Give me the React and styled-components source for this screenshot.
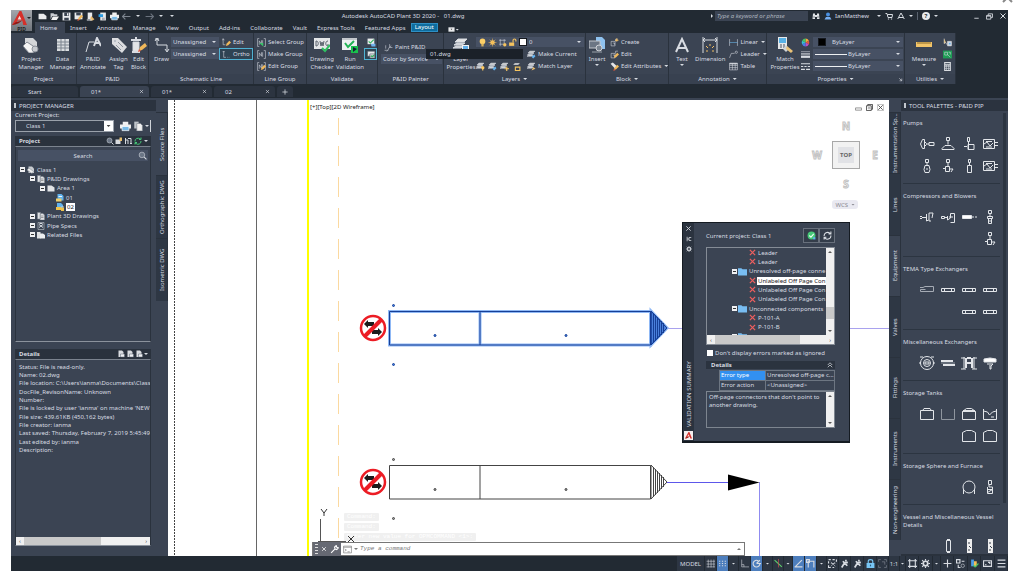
import { useState } from 'react';
import styled, { createGlobalStyle, css } from 'styled-components';

const colors = {
  dark: '#222a33',
  bar: '#2b333f',
  panel: '#3b4453',
  field: '#475164',
  line: '#2a323d',
  text: '#d8dce2',
  blue: '#0e6d9f',
  active: '#4d7ebd',
};

const GlobalStyle = createGlobalStyle`
  * {
    box-sizing: border-box;
  }
  body {
    margin: 0;
    background: #fff;
    color: ${colors.text};
    font-family: 'Noto Sans', 'Open Sans', sans-serif;
    font-size: 6px;
    line-height: 8px;
  }
  button,
  input,
  select,
  textarea {
    margin: 0;
    padding: 0;
    border: 0;
    border-radius: 0;
    background: none;
    color: inherit;
    font: inherit;
  }
  svg {
    display: block;
    flex: none;
  }
`;

/* ---------- icons ---------- */

const stack = (
  <>
    <path d="M5 2h9l-3 3H2z" fill="#e6e6e6" />
    <path d="M4 6h8l-3 2H1zM3 9h8l-3 2H0z" fill="#c9ccd1" />
  </>
);

const group = (
  <>
    <path d="M4 1H1v14h3M12 1h3v14h-3" />
    <path d="M4 12V5l4 6V4M10 4v8" />
  </>
);

const pencil = (
  <path d="M7 14l1-4 5-5 3 3-5 5z" fill="#f0b85a" stroke="none" />
);

const block = (
  <>
    <path d="M2 6h7v8H2zM5 9h3v3" />
    <path d="M10 6V2h4" />
  </>
);

const glyphs = {
  logo: (
    <>
      <path d="M8 0L0 15l4-1 2-4h5l1 5h4L10 0z" fill="#d5302a" stroke="none" />
      <path d="M8 5l2 4H6z" fill="#f3dedc" stroke="none" />
      <path d="M0 15l4-3 7-2-4 3-3 1z" fill="#8f1714" stroke="none" />
    </>
  ),
  newFile: <path d="M1 3h9l5 4v6H1z" fill="#e8eaec" stroke="none" />,
  open: (
    <>
      <path d="M1 2h5l2 2h5v3H4l-3 6z" fill="#c9ccd1" stroke="none" />
      <path d="M5 8h11l-4 6H2z" fill="#f2f2f2" stroke="none" />
    </>
  ),
  save: (
    <>
      <path d="M1 1h14v14H1z" fill="#e8eaec" stroke="none" />
      <path d="M4 1h8v6H4zM4 10h8v5H4z" fill="#3a4350" stroke="none" />
      <path d="M9 2h2v4H9z" fill="#fff" stroke="none" />
    </>
  ),
  saveAs: (
    <>
      <path d="M1 1h14v12H1z" fill="#e8eaec" stroke="none" />
      <path d="M4 1h8v5H4z" fill="#3a4350" stroke="none" />
      {pencil}
      <path d="M6 16l1-4 3 2z" fill="#e4573b" stroke="none" />
    </>
  ),
  plot: (
    <>
      <path d="M3 1h8v12H3z" fill="#e8eaec" stroke="none" />
      <path d="M9 7l6 6-3 2H7z" fill="#e9b869" stroke="none" />
      <path d="M2 13h8v2H2z" />
    </>
  ),
  publish: (
    <>
      <path d="M4 1h10v14H4z" fill="#e8eaec" stroke="none" />
      <path d="M1 4h8v5H1z" fill="#2d9be0" stroke="none" />
      <path d="M7 11h5M7 13h5" stroke="#667" />
    </>
  ),
  printer: (
    <>
      <path d="M4 1h8v4H4zM0 5h16v6H0z" fill="#f0f0f0" stroke="none" />
      <path d="M3 8h10v6H3z" fill="#78b9e6" stroke="#fff" />
    </>
  ),
  undo: <path d="M6 3L1 8l5 5M2 8h13" stroke="#7d8590" strokeWidth="2" />,
  redo: <path d="M10 3l5 5-5 5M14 8H1" stroke="#6b737e" strokeWidth="2" />,
  binoculars: (
    <>
      <path d="M2 3h4v11H1zM10 3h4l1 11h-5zM6 6h4v4H6z" fill="#dfe2e6" stroke="none" />
      <path d="M3 10h2M11 10h2" stroke="#222a33" strokeWidth="2" />
    </>
  ),
  user: (
    <>
      <circle cx="8" cy="5" r="4" fill="#4a90e2" stroke="none" />
      <path d="M1 15l3-5h8l3 5z" fill="#77aef0" stroke="none" />
    </>
  ),
  cart: (
    <>
      <path d="M1 3h3l2 8h8l1-6H5" strokeWidth="2" />
      <circle cx="7" cy="14" r="1" />
      <circle cx="13" cy="14" r="1" />
    </>
  ),
  appTri: <path d="M8 2l5 9H3zM1 13l4-2M15 13l-4-2" strokeWidth="2" />,
  restore: <path d="M5 5V2h10v8h-4M1 6h10v8H1zM1 7h10" strokeWidth="2" />,
  close: <path d="M3 3l10 10M13 3L3 13" strokeWidth="2" />,
  minimise: <path d="M3 12h10" strokeWidth="2" />,
  launcher: <path d="M4 4l8 8M12 5v7H5" strokeWidth="2" />,
  projectManager: (
    <>
      <path d="M2 1h8l4 4v7H2z" fill="#d4d6d9" stroke="none" />
      <path d="M0 9l4-4 9 6-3 5H6z" fill="#f4f4f4" stroke="#858b95" />
      <circle cx="12" cy="12" r="3" fill="#c8cbd0" stroke="#8a9099" />
    </>
  ),
  dataManager: (
    <>
      <path d="M2 2h12v12H2z" fill="#dadde0" stroke="none" />
      <path d="M2 5h12M2 8h12M2 11h12M6 2v12M10 2v12" stroke="#7d858f" />
    </>
  ),
  annotate: (
    <>
      <path d="M1 15l3-10h5" strokeWidth="1" />
      <path d="M9 9l3-8 4 8M10 6h5" strokeWidth="2" />
    </>
  ),
  tag: (
    <>
      <path d="M1 1h6l9 9-5 6-10-9z" fill="#dcdde0" stroke="none" />
      <circle cx="4" cy="4" r="1" fill="#3b4453" />
      <path d="M7 5l5 5M5 8l5 5" stroke="#8d939c" />
    </>
  ),
  editBlock: (
    <>
      <path d="M2 5h6v9H2z" fill="#e2e4e6" />
      <path d="M0 3h10M5 0v3M1 15h8" strokeWidth="2" />
      <path d="M8 14l1-4 5-4 2 3-5 4z" fill="#f0b85a" stroke="none" />
      <path d="M7 15l1-3 2 2z" fill="#e4573b" stroke="none" />
    </>
  ),
  draw: <path d="M3 2v6h10v6M1 2h4M11 12l2 3 2-3M1 4l2-3 2 3" />,
  edit: (
    <>
      <path d="M2 2v10h4M1 4l1-3 2 3" />
      {pencil}
    </>
  ),
  ortho: <path d="M3 2v11h4M9 13h1M12 13h1M1 3h4" />,
  selectGroup: (
    <>
      {group}
      <path d="M4 9l7 6V9z" fill="#39c26a" stroke="none" />
    </>
  ),
  makeGroup: group,
  editGroup: (
    <>
      {group}
      {pencil}
    </>
  ),
  checker: (
    <>
      <path d="M0 1h16v11H0z" fill="#e4e6e8" stroke="none" />
      <path d="M2 4v5c3 0 3-5 0-5zM6 4l1 5 1-4 1 4 1-5M14 4c-3 0-3 5 0 5V7" stroke="#59616c" />
      <path d="M8 11l3 3 5-6" stroke="#2fc061" strokeWidth="2" />
    </>
  ),
  run: (
    <>
      <path d="M0 1h15v12H0z" fill="#eef0f1" stroke="none" />
      <path d="M0 2h15" stroke="#9aa0a8" />
      <path d="M3 6l3 4 6-6" stroke="#22b455" strokeWidth="2" />
      <path d="M9 9h7v7H9z" fill="#19c24c" stroke="none" />
      <path d="M11 10v5l4-3z" fill="#123" stroke="none" />
    </>
  ),
  settingsCheck: (
    <>
      <path d="M1 1h12v10H1z" fill="#e8eaec" stroke="none" />
      <path d="M3 6l3 3 6-6" stroke="#2fb45c" strokeWidth="2" />
      <path d="M7 10h8v5H8z" fill="#6fb2ec" stroke="none" />
    </>
  ),
  summary: (
    <>
      <path d="M1 2h13v9H1zM5 7h9v7H5z" fill="#e8eaec" stroke="#46505c" />
      <path d="M7 10l2 2 4-3" stroke="#2fb45c" strokeWidth="2" />
    </>
  ),
  paint: <path d="M1 13h6l2-5h6M3 10V4M7 13l-2 2M10 2v5l3-2" />,
  layerProps: (
    <>
      {stack}
      <path d="M3 12h8l-3 2H0z" fill="#b9bdc3" stroke="none" />
      <path d="M9 8h7v8H9z" fill="#f2f2f2" stroke="none" />
      <path d="M10 9h5v5h-5z" fill="#62aee8" stroke="none" />
    </>
  ),
  bulb: (
    <>
      <circle cx="8" cy="6" r="5" fill="#fbcf67" stroke="none" />
      <path d="M6 10h4v5H6z" fill="#d9b25d" stroke="none" />
    </>
  ),
  sun: (
    <>
      <circle cx="8" cy="8" r="4" fill="#fbc964" stroke="none" />
      <path d="M8 1v14M1 8h14M3 3l10 10M13 3L3 13" stroke="#f1b956" />
    </>
  ),
  freeze: (
    <>
      <path d="M2 4h12M4 2v12M2 11h8M11 2v7" />
      <circle cx="12" cy="12" r="3" fill="#f4c35f" stroke="none" />
    </>
  ),
  unlock: (
    <>
      <path d="M9 8V4c0-3 5-3 5 0v2" stroke="#f4c35f" strokeWidth="2" />
      <path d="M2 8h9v6H2z" fill="#f4c35f" stroke="none" />
    </>
  ),
  stackOn: (
    <>
      {stack}
      <circle cx="12" cy="10" r="3" fill="#fbc964" stroke="none" />
      <path d="M11 12h2v3h-2z" fill="#fbc964" stroke="none" />
    </>
  ),
  stackBlue: (
    <>
      {stack}
      <path d="M8 12l5-4 2 3-4 4z" fill="#66b3ee" stroke="none" />
    </>
  ),
  stackSun: (
    <>
      {stack}
      <path d="M12 8v8M8 12h8" stroke="#fbc964" strokeWidth="2" />
    </>
  ),
  stackLock: (
    <>
      <path d="M5 2h9l-3 3H2z" fill="#e6e6e6" stroke="none" />
      <path d="M6 9h8v6H6z" stroke="#f4c35f" strokeWidth="2" />
    </>
  ),
  stackMatch: (
    <>
      {stack}
      <path d="M8 15l3-6 4 3z" fill="#eabc6c" stroke="none" />
    </>
  ),
  insert: (
    <>
      <path d="M7 0h6l3 3v9H7z" fill="#8fc2ef" stroke="none" />
      <path d="M0 4h11v7H0z" fill="#6c7684" stroke="#c3c7cd" />
      <circle cx="10" cy="11" r="3" fill="#7c8692" stroke="#d0d3d8" />
      <path d="M3 15l10 0" stroke="#9aa1ab" />
    </>
  ),
  create: (
    <>
      {block}
      <path d="M12 1v5M9 4h6" stroke="#f2bf65" strokeWidth="2" />
    </>
  ),
  blockEdit: (
    <>
      {block}
      {pencil}
    </>
  ),
  attributes: (
    <>
      <path d="M1 3l4-2 8 7-4 4z" fill="#e3e5e8" stroke="none" />
      {pencil}
      <path d="M6 16l1-4 3 2z" fill="#e4573b" stroke="none" />
    </>
  ),
  textA: <path d="M2 15L8 2l6 13M4 11h8" strokeWidth="2" />,
  dimension: (
    <>
      <path d="M1 0v16M15 0v16M1 3h14M3 1L1 3l2 2M13 1l2 2-2 2" />
      <path d="M8 7v2M4 9l2 2M12 9l-2 2M4 14h2M10 14h2" stroke="#f2bf65" />
    </>
  ),
  linear: (
    <>
      <path d="M1 2v12M15 2v12" />
      <path d="M1 8h14" stroke="#6ab7ee" />
    </>
  ),
  leader: (
    <>
      <path d="M1 14l3-8h6" />
      <circle cx="13" cy="4" r="2" />
    </>
  ),
  table: (
    <>
      <path d="M1 2h14v12H1zM1 6h14M1 10h14M6 2v12M11 2v12" />
      <path d="M1 3h14" strokeWidth="2" />
    </>
  ),
  match: (
    <>
      <path d="M1 0h9v12H1z" fill="#e6e8ea" stroke="none" />
      <path d="M2 1h7v5H2z" fill="#58b1e6" stroke="none" />
      <path d="M3 8h2M6 8h2M3 10h2M6 10h2" stroke="#4a5360" />
      <path d="M6 12l3-4 3 4-3 3z" fill="#cfd3d8" stroke="none" />
      <path d="M10 9l6 5-2 2-5-4z" fill="#e9c277" stroke="none" />
    </>
  ),
  wheel: (
    <>
      <path d="M8 8V1a7 7 0 0 1 6 4z" fill="#f3a93c" stroke="none" />
      <path d="M8 8l6-3a7 7 0 0 1 0 6z" fill="#e4573b" stroke="none" />
      <path d="M8 8l6 3a7 7 0 0 1-6 4z" fill="#c14dc0" stroke="none" />
      <path d="M8 8v7a7 7 0 0 1-6-4z" fill="#4a7be8" stroke="none" />
      <path d="M8 8l-6 3a7 7 0 0 1 0-6z" fill="#35c1d4" stroke="none" />
      <path d="M8 8L2 5a7 7 0 0 1 6-4z" fill="#47c765" stroke="none" />
    </>
  ),
  weights: (
    <>
      <path d="M0 3h16" />
      <path d="M0 7h16" strokeWidth="2" />
      <path d="M0 12h16" strokeWidth="4" />
    </>
  ),
  dashes: <path d="M0 3h16M0 8h4M6 8h4M12 8h4M0 13h7M9 13h7" strokeWidth="2" />,
  ruler: (
    <>
      <path d="M0 5h16v5H0z" fill="#f2c468" stroke="none" />
      <path d="M2 5v2M4 5v2M6 5v2M8 5v2M10 5v2M12 5v2M14 5v2" stroke="#8a6a2a" />
    </>
  ),
  quickSelect: (
    <>
      <path d="M2 1v9l3-2 2 4" fill="#f2c468" />
      <path d="M8 6h7v8H8z" fill="#e4e6e8" />
      <path d="M10 8h4v4h-4z" fill="#5aa9e6" />
    </>
  ),
  selectAll: (
    <>
      <path d="M0 1h16v14H0z" fill="#1f9d55" stroke="none" />
      <path d="M3 4h5v5H3zM8 8l5 5M10 4h3v4" />
    </>
  ),
  calculator: (
    <>
      <path d="M2 0h12v16H2z" fill="#d9dce0" stroke="none" />
      <path d="M4 2h8v2H4z" fill="#47515f" stroke="none" />
      <path d="M4 7h2M7 7h2M10 7h2M4 10h2M7 10h2M10 10h2M4 13h2M7 13h2M10 13h2" stroke="#47515f" strokeWidth="2" />
    </>
  ),
  media: (
    <>
      <path d="M1 3h14v10H1z" fill="#e8eaec" stroke="none" />
      <path d="M6 6h4l-2 3z" fill="#333" stroke="none" />
    </>
  ),
  copy: (
    <>
      <path d="M2 1h7v11H2z" fill="#bfc4ca" stroke="none" />
      <path d="M6 4h6l3 3v9H6z" fill="#f0f0f0" stroke="#7b828c" />
    </>
  ),
  magnifier: (
    <>
      <circle cx="7" cy="7" r="5" fill="#6b7686" />
      <path d="M11 11l4 4" strokeWidth="2" />
    </>
  ),
  folderOpen: (
    <>
      <path d="M1 5h10v9H1z" fill="#d7dade" stroke="none" />
      <path d="M9 1h5v7H9z" fill="#eac06e" stroke="none" />
    </>
  ),
  tree: <path d="M3 2v12M3 6h5v8M8 3h6v10M12 13h4" strokeWidth="2" />,
  refresh: (
    <path d="M2 9a6 6 0 0 1 10-5l2 1M14 1v4h-4M14 8a6 6 0 0 1-10 5l-2-1M2 15v-4h4" strokeWidth="2" />
  ),
  project: (
    <>
      <path d="M3 1h7l4 4v9H3z" fill="#c8ccd1" stroke="none" />
      <path d="M0 8l4-4 9 7-3 4z" fill="#eee" stroke="#7b828c" />
    </>
  ),
  drawings: (
    <>
      <path d="M1 1h6v13H1zM6 3h6l3 3v10H6z" fill="#e0e2e5" stroke="#7b828c" />
      <path d="M8 8h5M8 11h5" stroke="#555" />
    </>
  ),
  folder: <path d="M1 3h8l6 4v8H1z" fill="#e2e4e7" stroke="none" />,
  dwg: (
    <>
      <path d="M3 0h8l4 4v9H3z" fill="#62b3ee" stroke="none" />
      <path d="M0 9h11v6H0z" fill="#f0cf6d" stroke="none" />
      <path d="M5 5h7" stroke="#e9f4fd" strokeWidth="2" />
    </>
  ),
  dwgLocked: (
    <>
      <path d="M2 0h8l4 4v6H2z" fill="#62b3ee" stroke="none" />
      <path d="M0 8h10v6H0zM10 9h6v7h-6z" fill="#f0c34d" stroke="none" />
      <path d="M11 9V7h4v2" />
    </>
  ),
  specs: (
    <>
      <path d="M2 1h12v14H2z" />
      <path d="M4 5l8 6M12 5l-8 6M5 3h6" strokeWidth="2" />
    </>
  ),
  related: (
    <>
      <path d="M0 2h7v13H0z" fill="#dfe1e4" stroke="none" />
      <path d="M6 5h6l4 3v7H6z" fill="#eceef0" stroke="none" />
    </>
  ),
  sheet: (
    <>
      <path d="M3 1h7l3 3v10H3z" fill="#d9dce0" stroke="none" />
      <path d="M7 8h8v6H7z" fill="#eef0f2" stroke="#555e6a" />
    </>
  ),
  redX: <path d="M2 2l12 12M14 2L2 14" stroke="#ee5f5f" strokeWidth="3" />,
  blueFolder: <path d="M0 2h6l2 2h8v11H0z" fill="#78bdf2" stroke="none" />,
  validated: (
    <>
      <circle cx="8" cy="8" r="7" fill="#46c878" stroke="none" />
      <path d="M4 8l3 3 5-6" stroke="#e9fff1" strokeWidth="2" />
      <path d="M11 11h4v4h-4z" fill="#5cb3f0" stroke="none" />
    </>
  ),
  pin: <path d="M3 2v12M3 8h5M8 4h6M8 12h6M8 4v8" strokeWidth="2" />,
  gear: (
    <>
      <circle cx="8" cy="8" r="4" strokeWidth="3" />
      <path d="M8 0v3M8 13v3M0 8h3M13 8h3M2 2l3 3M11 11l3 3M14 2l-3 3M5 11l-3 3" strokeWidth="2" />
    </>
  ),
  chevrons: <path d="M2 8l6-6 6 6M2 14l6-6 6 6" strokeWidth="2" />,
  wrench: (
    <path d="M2 14l7-7M9 7l-1-3 3-3 1 3 3 1-3 3z" strokeWidth="2" />
  ),
  prompt: (
    <>
      <path d="M1 2h14v12H1zM1 4h14" stroke="#666" />
      <path d="M3 7l3 2-3 2M8 12h4" stroke="#666" />
    </>
  ),
  maximise: (
    <>
      <path d="M4 4V1h11v11h-3M1 4h11v11H1z" stroke="#444" strokeWidth="2" />
      <path d="M5 8h4v3H5z" stroke="#666" />
    </>
  ),
  boxX: (
    <>
      <path d="M1 1h14v14H1z" stroke="#777" />
      <path d="M3 3l10 10M13 3L3 13" stroke="#444" strokeWidth="2" />
    </>
  ),
  boxMin: <path d="M1 9h14v5H1z" stroke="#888" strokeWidth="2" />,
  grid: <path d="M4 1v14M9 1v14M14 1v14M1 4h15M1 9h15M1 14h15" />,
  dots: (
    <path d="M2 4h2M7 4h2M12 4h2M2 8h2M7 8h2M12 8h2M2 12h2M7 12h2M12 12h2" strokeWidth="2" />
  ),
  corner: <path d="M3 1v13h13M3 10h4v4" />,
  polar: <path d="M14 8a6 6 0 1 1-3-5M8 8h8M8 8l6-6" strokeWidth="2" />,
  iso: (
    <>
      <path d="M1 2l13 12" stroke="#5fd06c" strokeWidth="2" />
      <path d="M8 0v15" stroke="#e05353" />
    </>
  ),
  slope: <path d="M2 14L14 2M1 14h14" strokeWidth="2" />,
  snap: <path d="M4 4h10v11M4 4v11M1 1h5v5H1z" strokeWidth="2" />,
  cycling: (
    <>
      <path d="M1 1h4M8 1h4M15 1v4M1 4v4M1 11v4h4M8 15h3" strokeWidth="2" />
      <path d="M5 5l8 8M13 5l-8 8M5 8h8" />
    </>
  ),
  person: <path d="M3 15l5-8 5 5M8 7L5 4M8 7l6-1M9 3h3" strokeWidth="3" />,
  lock: (
    <>
      <path d="M4 7V4c0-4 8-4 8 0v3" stroke="#78c6f5" strokeWidth="2" />
      <path d="M1 7h14v9H1z" fill="#78c6f5" stroke="none" />
      <path d="M8 10v3" stroke="#2a5d80" strokeWidth="2" />
    </>
  ),
  viewport: <path d="M1 5V1h4M11 1h4v4M15 11v4h-4M5 15H1v-4M7 5h5v5" stroke="#8c939d" />,
  scaleBox: <path d="M3 3h10v10H3zM0 3h3V0M13 0v3h3M16 13h-3v3M3 16v-3H0" strokeWidth="2" />,
  plus: <path d="M8 1v14M1 8h14" strokeWidth="2" />,
  isolate: (
    <>
      <path d="M1 1h6v6H1zM10 4h5M4 10v5h4" strokeWidth="2" />
      <circle cx="12" cy="12" r="3" />
    </>
  ),
  performance: (
    <>
      <path d="M2 1h5v12H2z" fill="#4c9de8" stroke="none" />
      <path d="M7 4h5v9H7z" fill="#f2bf58" stroke="none" />
      <path d="M6 11l3 3 6-6" stroke="#48c96c" strokeWidth="2" />
    </>
  ),
  fullscreen: <path d="M1 3h14v10H1zM9 6h3v3M4 10h2" strokeWidth="2" />,
  menu: <path d="M1 2h14M1 8h14M1 14h14" strokeWidth="2" />,
  /* palette symbols */
  pumpA: (
    <>
      <path d="M3.500 3.500h2v9h-2l-2-4.500zM5.500 5.500l2 2v1l-2 2" />
      <path d="M8 8h2M10 6.500h5v3h-5z" />
    </>
  ),
  pumpB: <path d="M6.500 1.500h3v3h-3zM8 4.500v4M5 9.500h6l3 3v1H2v-1z" />,
  pumpC: <path d="M6.500 1.500h2v4h-2zM7.500 6v8M3 10.500h3M7 8.500h6v5H7z" />,
  pumpD: <path d="M1.500 3.500h11v9h-11zM2 8l3-2 3 4 3-3M4 5.500h6M4 11h6M13 6.500h3M13 9.500h3" />,
  pumpE: (
    <>
      <path d="M6.500 1.500h3v3h-3zM8 5v2M6 7.500h4l1 4-1 3H6l-1-3z" />
      <path d="M8 10v2" />
    </>
  ),
  pumpF: <path d="M6.500 1.500h3v3h-3zM8 5v3M5.500 8.500h4v5h-4zM10 11h3l-2 3M3 10.500h3" />,
  pumpG: <path d="M7.500 1.500h2v3h-2zM8.500 5v2M6.500 7.500h4v7h-4z" />,
  compA: <path d="M1 7.500h2M1 9.500h2M3 8.500h4M7.500 5v7l2-1M14 4h-4v8h2M14 4l-1 5" />,
  compB: <path d="M1.500 7.500h3v2h-3zM5 8.500h2M7.500 7v4l3-2V4.500h4v9h-4M9 8h4" />,
  compC: (
    <>
      <path d="M1.500 6.500h9v3h-9z" fill="#fff" />
      <path d="M11 8h2M14 8h2" />
    </>
  ),
  compD: <path d="M6.500 1.500h3v3h-3zM8 5v2M5.500 7.500h5v2h-5zM6.500 9.500h3v5h-3zM8 11v2" />,
  exA: <path d="M1 5.500h3l2-1h8.500v5H1.500v-2h5" stroke="#a5abb4" />,
  exB: <path d="M1.500 6.500h13v3h-13zM4.500 6v4M11.500 6v4" />,
  miscA: (
    <>
      <circle cx="8" cy="8" r="6.500" />
      <circle cx="8" cy="8" r="3.500" />
      <path d="M6 7h4v2H6zM0 8h2M14 8h2M1 2h3M12 2h3" />
    </>
  ),
  miscB: (
    <>
      <path d="M1 6h12M3 10h12" strokeWidth="2" />
      <path d="M1 8h14" stroke="#8d949e" />
    </>
  ),
  miscC: (
    <>
      <path d="M3 2v12M13 2v12M0 3h4M12 3h4M0 14h5M11 14h5" />
      <path d="M5 3v10M11 3v10M6 8h4M6 3h4" strokeWidth="2" />
    </>
  ),
  miscD: (
    <>
      <path d="M2 4l6-1 6 1v3H2z" fill="#fff" />
      <path d="M5 9h6l-2 2v3H8v-4" />
    </>
  ),
  tankA: <path d="M1.500 4.500h13v9h-13zM4 4l1-1.500h6l1 1.500" />,
  tankB: <path d="M1.500 3v10.500h13V3" stroke="#8f969f" />,
  tankC: <path d="M1.500 5.500h13v8h-13zM1.500 5.500l4-3h5l4 3M2 4.500h12" />,
  tankD: <path d="M1.500 3v10.500h13V3M1.500 5l4 1 2 3 3-3 4-1M9 11h3" />,
  tankE: <path d="M1.500 4.500l4-2h5l4 2v9h-13z" />,
  sphere: (
    <>
      <circle cx="8" cy="8" r="6" />
      <path d="M2.500 10v5M13.500 10v5" />
    </>
  ),
  furnace: <path d="M6.500 1.500h3v4h-3zM7 6v2h3.500v2.500h-5M5.500 8v6.500h5v-4l-5 3" />,
  vesselA: <path d="M6.500 2.500h4v11h-4zM7 1.500h3M7 14.500h3" />,
  vesselB: (
    <>
      <path d="M6 1h5v14H6z" fill="#eee" stroke="none" />
      <path d="M7 5h2M8 8l2 2M7 12h2" stroke="#333b47" />
    </>
  ),
};

function Glyph({ name, size = 9 }) {
  return (
    <svg
      width={size}
      height={size}
      viewBox="0 0 16 16"
      fill="none"
      stroke="currentColor"
      aria-hidden="true"
    >
      {glyphs[name]}
    </svg>
  );
}

const Caret = styled.span`
  flex: none;
  width: 4px;
  height: 2px;
  background: currentColor;
  clip-path: polygon(0 0, 100% 0, 50% 100%);
`;

/* ---------- frame ---------- */

const Page = styled.div`
  display: flex;
  flex-direction: column;
  height: 100vh;
  min-height: 480px;
  padding: 0 11px 9px;
`;

const Backdrop = styled.div`
  flex: none;
  display: flex;
  justify-content: flex-end;
  height: 10px;
  margin-right: -7px;
  color: #888;
`;

const Window = styled.div`
  flex: 1;
  display: flex;
  flex-direction: column;
  min-height: 0;
  background: ${colors.dark};
`;

const Header = styled.header`
  display: grid;
  grid-template: 12px 11px / 24px 1fr;
`;

const AppButton = styled.button`
  grid-row: 1 / 3;
  width: 21px;
  height: 21px;
  display: flex;
  flex-wrap: wrap;
  align-items: center;
  justify-content: center;
  background: linear-gradient(#a3a7ac, #6f747b);
  color: #222;
  font-size: 5px;
  line-height: 4px;
  font-weight: bold;
`;

const TitleBar = styled.div`
  display: flex;
  align-items: center;
  justify-content: space-between;
  min-width: 0;
`;

const IconRow = styled.div`
  display: flex;
  align-items: center;
  gap: ${(p) => p.$gap || 0}px;
`;

const QuickTools = styled(IconRow)`
  padding-left: 3px;
  ${Caret} {
    margin: 0 2px;
  }
`;

const IconButton = styled.button`
  flex: 0 0 ${(p) => p.$w || 10}px;
  display: flex;
  align-items: center;
  justify-content: center;
`;

const Title = styled.h1`
  margin: 0;
  padding-right: 80px;
  font-size: 6px;
  font-weight: normal;
  white-space: pre;
`;

const SearchInput = styled.input`
  width: 93px;
  height: 10px;
  padding-left: 2px;
  background: ${colors.panel};
  font-style: italic;
  &::placeholder {
    color: #aeb5bf;
  }
`;

const Expand = styled(Caret)`
  transform: rotate(-90deg);
`;

const UserMenu = styled.button`
  display: flex;
  align-items: center;
  gap: 3px;
  margin-right: 4px;
`;

const WindowButtons = styled(IconRow)`
  padding-left: 30px;
`;

const HelpButton = styled(IconButton)`
  height: 8px;
  flex-basis: 8px;
  border-radius: 4px;
  background: #e8eaec;
  color: #222a33;
  font-weight: bold;
`;

const Divider = styled.span`
  width: 1px;
  height: 8px;
  background: #59626e;
`;

const MenuTabs = styled.nav`
  display: flex;
  align-items: flex-end;
`;

const MenuTab = styled.button`
  height: 11px;
  padding: 0 5px;
  line-height: 10px;
  white-space: nowrap;
  ${(p) =>
    p.$active &&
    css`
      padding-right: 8px;
      background: ${colors.panel};
    `}
  ${(p) =>
    p.$contextual &&
    css`
      height: 9px;
      margin: 0 8px 1px 0;
      padding: 0 3px;
      border: 1px solid #2f8fc4;
      background: ${colors.blue};
      line-height: 7px;
      color: #fff;
    `}
`;

/* ---------- ribbon ---------- */

const Ribbon = styled.div`
  flex: none;
  display: flex;
  height: 51px;
`;

const RibbonPanel = styled.section`
  flex: 0 0 ${(p) => p.$w}px;
  display: flex;
  flex-direction: column;
  min-width: 0;
  border-right: 1px solid ${colors.line};
  background: ${colors.panel};
`;

const PanelBody = styled.div`
  flex: 1;
  display: flex;
  gap: ${(p) => p.$gap || 0}px;
  padding-left: ${(p) => p.$pad || 0}px;
`;

const PanelTitle = styled.h2`
  position: relative;
  display: flex;
  align-items: center;
  justify-content: center;
  gap: 3px;
  height: 10px;
  margin: 0;
  font-size: 6px;
  font-weight: normal;
  background: #384150;
  button {
    position: absolute;
    right: 1px;
  }
`;

const BigTool = styled.button`
  position: relative;
  flex: 0 0 ${(p) => p.$w}px;
  display: flex;
  flex-direction: column;
  align-items: center;
  padding-top: 4px;
  text-align: center;
  white-space: pre;
  svg {
    margin-bottom: 2px;
  }
  ${Caret} {
    margin-top: 1px;
  }
`;

const ToolList = styled.div`
  flex: ${(p) => (p.$w ? `0 0 ${p.$w}px` : 1)};
  display: flex;
  flex-direction: column;
  min-width: 0;
  padding-top: ${(p) => p.$top || 3}px;
`;

const ToolRow = styled.div`
  display: flex;
  align-items: center;
  gap: 3px;
  height: 12px;
`;

const SmallTool = styled.button`
  display: flex;
  align-items: center;
  gap: 2px;
  height: 12px;
  padding: 0 2px;
  white-space: nowrap;
  border: 1px solid ${(p) => (p.$on ? '#4fb2d3' : 'transparent')};
  background: ${(p) => (p.$on ? '#2f4353' : 'none')};
  ${Caret} {
    margin-left: 1px;
  }
`;

const SelectWrap = styled.div`
  flex: ${(p) => (p.$w ? `0 0 ${p.$w}px` : 1)};
  display: grid;
  align-items: center;
  min-width: 0;
  height: 10px;
  background: ${colors.field};
  > * {
    grid-area: 1 / 1;
  }
  ${Caret} {
    justify-self: end;
    margin-right: 3px;
    pointer-events: none;
  }
`;

const Select = styled.select`
  width: 100%;
  height: 10px;
  padding-left: ${(p) => p.$pad || 2}px;
  appearance: none;
  outline: none;
`;

const SelectLead = styled.span`
  display: flex;
  align-items: center;
  gap: 1px;
  padding-left: 2px;
  pointer-events: none;
`;

const Swatch = styled.span`
  width: 8px;
  height: 8px;
  margin-left: ${(p) => p.$left || 0}px;
  border: 1px solid #15191f;
  background: ${(p) => p.$color};
`;

const Stroke = styled.span`
  width: 32px;
  height: 1px;
  background: #eef0f2;
`;

const Tooltip = styled.div`
  position: absolute;
  top: 49px;
  left: 426px;
  z-index: 5;
  width: 97px;
  height: 10px;
  padding-left: 4px;
  background: #1b2129;
  line-height: 10px;
`;

/* ---------- file tabs ---------- */

const FileTabs = styled.div`
  flex: none;
  display: flex;
  align-items: flex-end;
  gap: 2px;
  height: 14px;
  padding-bottom: 1px;
`;

const FileTab = styled.div`
  flex: 0 0 ${(p) => p.$w}px;
  display: flex;
  align-items: center;
  justify-content: space-between;
  height: 11px;
  padding: 0 5px 0 ${(p) => p.$pad}px;
  border-radius: 3px 3px 0 0;
  background: ${(p) => (p.$active ? '#3a4352' : '#2c3440')};
`;

/* ---------- workspace ---------- */

const Workspace = styled.main`
  flex: 1;
  display: flex;
  min-height: 0;
  border-top: 2px solid ${colors.panel};
`;

const SidePanel = styled.aside`
  flex: 0 0 ${(p) => p.$w}px;
  display: flex;
  min-width: 0;
  background: ${colors.panel};
`;

const SideContent = styled.div`
  flex: 1;
  display: flex;
  flex-direction: column;
  min-width: 0;
`;

const SideTitle = styled.h2`
  flex: none;
  display: flex;
  align-items: center;
  gap: 3px;
  height: 11px;
  margin: 0;
  padding-left: 3px;
  background: ${colors.bar};
  font-size: 6px;
  font-weight: normal;
  &::before {
    content: '';
    width: 2px;
    height: 5px;
    background: #c3c8ce;
  }
`;

const VerticalTabs = styled.div`
  flex: 0 0 ${(p) => p.$w}px;
  display: flex;
  flex-direction: column;
  padding-top: 12px;
`;

const VerticalTab = styled.button`
  flex: 0 0 ${(p) => p.$h}px;
  display: flex;
  align-items: center;
  justify-content: center;
  border: 1px solid ${colors.line};
  border-width: 0 0 1px 1px;
  background: ${(p) => (p.$active ? colors.panel : '#2e3744')};
  writing-mode: vertical-rl;
  transform: rotate(180deg);
  white-space: nowrap;
`;

const ProjectArea = styled.div`
  flex: 1;
  display: flex;
  flex-direction: column;
  min-height: 0;
  padding: 0 5px 10px 4px;
`;

const FieldLabel = styled.label`
  line-height: 9px;
`;

const ProjectPicker = styled.div`
  display: flex;
  align-items: center;
  gap: 2px;
  height: 12px;
  border-right: 1px solid #cfd3d8;
`;

const PickerField = styled(SelectWrap)`
  height: 12px;
  border: 1px solid #9aa1ab;
  background: #343d4b;
  margin-right: 4px;
`;

const PickerArrow = styled.span`
  justify-self: end;
  width: 9px;
  height: 10px;
  display: flex;
  align-items: center;
  justify-content: center;
  background: #fff;
  color: #444;
  pointer-events: none;
  ${Caret} {
    margin: 0;
  }
`;

const SectionBar = styled.div`
  flex: none;
  display: flex;
  align-items: center;
  justify-content: space-between;
  height: 10px;
  margin-top: ${(p) => p.$top}px;
  padding: 0 3px 0 4px;
  background: ${colors.line};
  font-weight: bold;
`;

const Frame = styled.div`
  flex: ${(p) => p.$grow} 1 0;
  display: flex;
  flex-direction: column;
  min-height: 0;
  overflow: hidden;
  border: 1px solid ${colors.line};
  border-top-color: #7b838e;
  border-bottom-color: #8b929c;
`;

const TreeSearch = styled.div`
  flex: none;
  display: flex;
  align-items: center;
  height: 11px;
  margin: 3px 2px 4px;
  padding: 0 1px 0 10px;
  background: ${colors.field};
  input {
    flex: 1;
    min-width: 0;
    text-align: center;
  }
  input::placeholder {
    color: ${colors.text};
  }
`;

const Rows = styled.ul`
  display: grid;
  grid-auto-rows: 9px 9px 10px;
  margin: 0;
  padding: 0;
  list-style: none;
`;

const TreeRow = styled.li`
  display: flex;
  align-items: center;
  gap: ${(p) => p.$gap || 2}px;
  padding-left: ${(p) => p.$indent}px;
  white-space: nowrap;
`;

const Toggle = styled.span`
  flex: 0 0 5px;
  display: flex;
  align-items: center;
  justify-content: center;
  height: 5px;
  background: #f0f1f3;
  &::before {
    content: '';
    width: 3px;
    height: 1px;
    background: #333;
  }
`;

const Selected = styled.span`
  padding: 0 1px;
  background: #fff;
  color: #1c2026;
`;

const ErrorName = styled.span`
  flex: 1;
  padding-left: 1px;
  ${(p) =>
    p.$selected &&
    css`
      background: #fff;
      color: #1c2026;
    `}
`;

const Info = styled.div`
  flex: 1;
  display: grid;
  grid-auto-rows: 8px 8px 9px;
  align-content: start;
  min-height: 0;
  padding: 3px 0 0 3px;
  overflow: hidden;
  white-space: nowrap;
`;

const HScroll = styled.div`
  flex: none;
  display: flex;
  align-items: center;
  justify-content: space-between;
  height: ${(p) => p.$h || 8}px;
  padding: 0 3px;
  background: #f0f0f0;
  color: #444;
`;

const Thumb = styled.span`
  flex: 0 0 ${(p) => p.$w}%;
  height: 100%;
  margin-right: auto;
  margin-left: 3px;
  background: #c9c9c9;
`;

/* ---------- canvas ---------- */

const Canvas = styled.section`
  position: relative;
  flex: 1;
  min-width: 0;
  overflow: hidden;
  background: #fff;
  color: #333;
`;

const Sheet = styled.svg`
  position: relative;
  width: 100%;
  height: 100%;
`;

const ViewLabel = styled.div`
  position: absolute;
  top: 3px;
  left: 142px;
  color: #222;
`;

const DocButtons = styled.div`
  position: absolute;
  top: 4px;
  right: 5px;
  display: flex;
  gap: 4px;
`;

const ViewCube = styled.div`
  position: absolute;
  top: 19px;
  right: 7px;
  display: grid;
  grid-template: 14px 44px 14px / 14px 44px 14px;
  place-items: center;
  color: #fff;
  font-size: 10px;
  font-weight: bold;
  -webkit-text-stroke: 1px #c2c2c2;
  span:nth-child(1) {
    grid-area: 1 / 2;
  }
  span:nth-child(2) {
    grid-area: 2 / 1;
  }
  span:nth-child(4) {
    grid-area: 2 / 3;
  }
  span:nth-child(5) {
    grid-area: 3 / 2;
  }
`;

const CubeFace = styled.button`
  grid-area: 2 / 2;
  width: 28px;
  height: 28px;
  border: 1px solid #a8a8a8;
  background: #e1e2e6;
  box-shadow: inset 0 0 0 5px #f2f2f2;
  color: #666;
  font-size: 6px;
  -webkit-text-stroke: 0;
`;

const Wcs = styled.button`
  position: absolute;
  top: 100px;
  right: 31px;
  display: flex;
  align-items: center;
  gap: 3px;
  height: 9px;
  padding: 0 3px;
  border-radius: 3px;
  background: #e9e9f1;
  color: #8a8a92;
`;

const History = styled.div`
  position: absolute;
  left: 176px;
  bottom: 15px;
  display: flex;
  flex-direction: column;
  align-items: flex-start;
  gap: 2px;
  color: #fff;
  font-family: 'Liberation Mono', monospace;
  font-size: 6px;
  span {
    padding: 0 3px;
    border-radius: 1px;
    background: #f0f0f0;
  }
`;

const CommandLine = styled.div`
  position: absolute;
  right: 144px;
  bottom: 0;
  left: 144px;
  display: flex;
  align-items: center;
  gap: 2px;
  height: 14px;
  padding-right: 3px;
  border: 1px solid #777;
  background: #fff;
  color: #777;
  input {
    flex: 1;
    min-width: 0;
    outline: none;
    font-family: 'Liberation Mono', monospace;
    font-size: 6px;
    font-style: italic;
  }
  input::placeholder {
    color: #777;
  }
`;

const CommandGrip = styled.div`
  flex: 0 0 28px;
  display: flex;
  align-items: center;
  justify-content: space-between;
  height: 14px;
  padding: 0 2px;
  background: #666973;
  color: #fff;
  &::before {
    content: '';
    width: 3px;
    height: 10px;
    background: repeating-linear-gradient(#ddd 0 1px, transparent 1px 3px);
  }
`;

/* ---------- validation dialog ---------- */

const Dialog = styled.div`
  position: absolute;
  top: 122px;
  left: 514px;
  display: flex;
  width: 168px;
  height: 221px;
  border: 1px solid #151b22;
  border-bottom-width: 2px;
  background: ${colors.panel};
  color: ${colors.text};
`;

const DialogStrip = styled.div`
  flex: 0 0 11px;
  display: flex;
  flex-direction: column;
  align-items: center;
  gap: 4px;
  padding: 2px 0 1px;
  background: ${colors.bar};
`;

const StripTitle = styled.h2`
  flex: 1;
  display: flex;
  align-items: center;
  margin: 0;
  font-size: 6px;
  font-weight: normal;
  writing-mode: vertical-rl;
  transform: rotate(180deg);
  white-space: nowrap;
`;

const Badge = styled.span`
  width: 9px;
  height: 9px;
  display: flex;
  align-items: center;
  justify-content: center;
  background: #f4eeee;
`;

const DialogBody = styled.div`
  flex: 1;
  display: flex;
  flex-direction: column;
  min-width: 0;
  padding: 5px 14px 0 12px;
`;

const DialogHead = styled.div`
  display: flex;
  align-items: center;
  height: 15px;
  margin-bottom: 4px;
  span {
    flex: 1;
  }
`;

const BoxButton = styled.button`
  width: 16px;
  height: 15px;
  display: flex;
  align-items: center;
  justify-content: center;
  border: 1px solid #68707c;
  background: #343d4a;
`;

const ErrorBox = styled.div`
  flex: none;
  height: 98px;
  display: flex;
  flex-direction: column;
  border: 1px solid #858c96;
`;

const ErrorView = styled.div`
  flex: 1;
  display: flex;
  min-height: 0;
  overflow: hidden;
`;

const ErrorRows = styled(Rows)`
  flex: 1;
  align-content: start;
  min-width: 0;
  overflow: hidden;
`;

const VScroll = styled.div`
  flex: 0 0 8px;
  display: flex;
  flex-direction: column;
  align-items: center;
  justify-content: space-between;
  padding: 3px 0;
  background: #f0f0f0;
  color: #555;
  ${Thumb} {
    flex: 0 0 12px;
    width: 8px;
    margin: auto 0 11px;
  }
`;

const Up = styled(Caret)`
  transform: rotate(180deg);
`;

const IgnoreLabel = styled.label`
  display: flex;
  align-items: center;
  gap: 2px;
  height: 16px;
  white-space: nowrap;
  input {
    width: 6px;
    height: 6px;
    margin-left: 1px;
    appearance: none;
    background: #fff;
  }
  input:checked {
    background: #4a9be8;
  }
`;

const DetailsBar = styled.div`
  flex: none;
  display: flex;
  align-items: center;
  justify-content: space-between;
  height: 8px;
  padding: 0 2px 0 5px;
  background: ${colors.bar};
  font-weight: bold;
`;

const ErrorTable = styled.table`
  width: calc(100% - 13px);
  margin: 1px 0 0 13px;
  border-collapse: collapse;
  table-layout: fixed;
  th,
  td {
    height: 10px;
    padding: 0 0 0 1px;
    border: 1px solid #6d7682;
    overflow: hidden;
    font-weight: normal;
    line-height: 9px;
    text-align: left;
    white-space: nowrap;
  }
  th {
    width: 46px;
  }
  tr:first-child th {
    background: #3290f0;
    color: #fff;
  }
`;

const Description = styled.div`
  flex: none;
  display: flex;
  height: 37px;
  border: 1px solid #7d858f;
  textarea {
    flex: 1;
    min-width: 0;
    padding: 1px 2px;
    overflow: hidden;
    outline: none;
    resize: none;
  }
`;

/* ---------- tool palette ---------- */

const Palette = styled.div`
  flex: 1;
  min-height: 0;
  display: flex;
  overflow: hidden;
  border-bottom: 2px solid ${colors.line};
`;

const PaletteList = styled.div`
  flex: 1;
  min-width: 0;
  padding-left: 2px;
`;

const PaletteScroll = styled.div`
  flex: 0 0 3px;
  height: 88%;
  margin: 2px 2px 0 3px;
  background: #2c3541;
`;

const PaletteSection = styled.section`
  padding: 8px 0 6px;
  border-bottom: 1px solid #2c3541;
  h3 {
    margin: 0 0 6px;
    font-size: 6px;
    font-weight: normal;
  }
  &:last-child {
    border-bottom: 0;
  }
`;

const PaletteIcons = styled.div`
  display: flex;
  flex-wrap: wrap;
  justify-content: flex-end;
  padding-left: 12px;
`;

const PaletteTool = styled.button`
  width: 21px;
  height: 22px;
  display: flex;
  align-items: center;
  justify-content: center;
  color: #e3e6ea;
`;

/* ---------- status bar ---------- */

const StatusBar = styled.footer`
  flex: none;
  display: flex;
  justify-content: flex-end;
  height: 15px;
`;

const StatusItem = styled.button`
  flex: 0 0 ${(p) => p.$w}px;
  display: flex;
  align-items: center;
  justify-content: center;
  border-right: 1px solid ${colors.dark};
  background: ${(p) => (p.$on ? colors.active : '#2d3643')};
  white-space: nowrap;
`;

/* ---------- data ---------- */

const quickTools = ['newFile', 'open', 'save', 'saveAs', 'plot', 'publish', 'printer', 'undo'];

const menus = [
  'Home',
  'Insert',
  'Annotate',
  'Manage',
  'View',
  'Output',
  'Add-ins',
  'Collaborate',
  'Vault',
  'Express Tools',
  'Featured Apps',
];

const tree = [
  { indent: 4, icon: 'project', text: 'Class 1', toggle: true },
  { indent: 14, icon: 'drawings', text: 'P&ID Drawings', toggle: true },
  { indent: 24, icon: 'folder', text: 'Area 1', toggle: true },
  { indent: 40, icon: 'dwg', text: '01' },
  { indent: 40, icon: 'dwgLocked', text: '02', selected: true },
  { indent: 14, icon: 'drawings', text: 'Plant 3D Drawings', toggle: true },
  { indent: 14, icon: 'specs', text: 'Pipe Specs', toggle: true },
  { indent: 14, icon: 'related', text: 'Related Files', toggle: true },
];

const details = [
  'Status: File is read-only.',
  'Name: 02.dwg',
  'File location:  C:\\Users\\ianma\\Documents\\Class',
  'DocFile_RevisonName:  Unknown',
  'Number:',
  "File is locked by user 'ianma' on machine 'NEW",
  'File size: 439.61KB (450,162 bytes)',
  'File creator: ianma',
  'Last saved: Thursday, February 7, 2019 5:45:49',
  'Last edited by: ianma',
  'Description:',
];

const errors = [
  { text: 'Leader' },
  { text: 'Leader' },
  { text: 'Unresolved off-page conne', folder: true },
  { text: 'Unlabeled Off Page Con', selected: true },
  { text: 'Unlabeled Off Page Con' },
  { text: 'Unlabeled Off Page Con' },
  { text: 'Unconnected components', folder: true },
  { text: 'P-101-A' },
  { text: 'P-101-B' },
  { text: 'Orphaned annotations', folder: true },
];

const paletteTabs = [
  'Instrumentation Sp...',
  'Lines',
  'Equipment',
  'Valves',
  'Fittings',
  'Instruments',
  'Non-engineering',
];

const palettes = [
  {
    title: 'Pumps',
    icons: ['pumpA', 'pumpB', 'pumpC', 'pumpD', 'pumpE', 'pumpF', 'pumpG', 'pumpD'],
  },
  { title: 'Compressors and Blowers', icons: ['compA', 'compB', 'compC', 'compD', 'pumpF'] },
  { title: 'TEMA Type Exchangers', icons: ['exA', 'exB', 'exB', 'exB', 'exB', 'exB'] },
  { title: 'Miscellaneous Exchangers', icons: ['miscA', 'miscB', 'miscC', 'miscD'] },
  { title: 'Storage Tanks', icons: ['tankA', 'tankB', 'tankC', 'tankD', 'tankE', 'tankE'] },
  { title: 'Storage Sphere and Furnace', icons: ['sphere', 'furnace'] },
  {
    title: 'Vessel and Miscellaneous Vessel Details',
    icons: ['vesselA', 'vesselB', 'vesselB'],
  },
];

const statusItems = [
  { w: 28, text: 'MODEL' },
  { w: 12, icon: 'grid' },
  { w: 12, icon: 'dots', on: true },
  { w: 10, caret: true },
  { w: 12, icon: 'corner' },
  { w: 12, icon: 'polar', on: true },
  { w: 10, caret: true },
  { w: 11, icon: 'iso' },
  { w: 9, caret: true },
  { w: 12, icon: 'slope', on: true },
  { w: 12, icon: 'snap', on: true },
  { w: 10, caret: true },
  { w: 12, icon: 'cycling' },
  { w: 12, icon: 'person' },
  { w: 13, icon: 'person' },
  { w: 13, icon: 'lock' },
  { w: 12, icon: 'viewport' },
  { w: 11, text: '1:1' },
  { w: 6, caret: true },
  { w: 13, icon: 'scaleBox' },
  { w: 14, icon: 'gear' },
  { w: 8, caret: true },
  { w: 13, icon: 'plus' },
  { w: 14, icon: 'isolate' },
  { w: 13, icon: 'performance' },
  { w: 14, icon: 'fullscreen' },
  { w: 13, icon: 'menu' },
];

/* ---------- parts ---------- */

function Tool({ icon, w, caret, children }) {
  return (
    <BigTool $w={w}>
      <Glyph name={icon} size={16} />
      {children}
      {caret && <Caret />}
    </BigTool>
  );
}

function Small({ icon, on, caret, children, label }) {
  return (
    <SmallTool $on={on} aria-label={label}>
      <Glyph name={icon} size={9} />
      {children}
      {caret && <Caret />}
    </SmallTool>
  );
}

function Dropdown({ label, value, w, pad, lead }) {
  return (
    <SelectWrap $w={w}>
      <Select aria-label={label} $pad={pad}>
        <option>{value}</option>
      </Select>
      {lead && <SelectLead>{lead}</SelectLead>}
      <Caret />
    </SelectWrap>
  );
}

function Panel({ title, w, pad, gap, more, launcher, children }) {
  return (
    <RibbonPanel $w={w}>
      <PanelBody $pad={pad} $gap={gap}>
        {children}
      </PanelBody>
      <PanelTitle>
        {title}
        {more && <Caret />}
        {launcher && (
          <button aria-label={`${title} palette`}>
            <Glyph name="launcher" size={5} />
          </button>
        )}
      </PanelTitle>
    </RibbonPanel>
  );
}

function RibbonBar() {
  return (
    <Ribbon>
      <Panel title="Project" w={66} pad={4} gap={2}>
        <Tool icon="projectManager" w={32}>{'Project\nManager'}</Tool>
        <Tool icon="dataManager" w={27}>{'Data\nManager'}</Tool>
      </Panel>
      <Panel title="P&ID" w={72} pad={1}>
        <Tool icon="annotate" w={30}>{'P&ID\nAnnotate'}</Tool>
        <Tool icon="tag" w={21}>{'Assign\nTag'}</Tool>
        <Tool icon="editBlock" w={19}>{'Edit\nBlock'}</Tool>
      </Panel>
      <Panel title="Schematic Line" w={105} pad={3}>
        <Tool icon="draw" w={19}>Draw</Tool>
        <ToolList $w={48}>
          <ToolRow>
            <Dropdown label="Line type" value="Unassigned" />
          </ToolRow>
          <ToolRow>
            <Dropdown label="Line size" value="Unassigned" />
          </ToolRow>
        </ToolList>
        <ToolList $w={34}>
          <Small icon="edit">Edit</Small>
          <Small icon="ortho" on>Ortho</Small>
        </ToolList>
      </Panel>
      <Panel title="Line Group" w={53}>
        <ToolList>
          <Small icon="selectGroup">Select Group</Small>
          <Small icon="makeGroup">Make Group</Small>
          <Small icon="editGroup">Edit Group</Small>
        </ToolList>
      </Panel>
      <Panel title="Validate" w={71} pad={1}>
        <Tool icon="checker" w={28}>{'Drawing\nChecker'}</Tool>
        <Tool icon="run" w={28}>{'Run\nValidation'}</Tool>
        <ToolList $w={13}>
          <Small icon="settingsCheck" label="Validation settings" />
          <Small icon="summary" on label="Validation summary" />
        </ToolList>
      </Panel>
      <Panel title="P&ID Painter" w={66} pad={3}>
        <ToolList $w={61} $top={8}>
          <Small icon="paint">Paint P&amp;ID</Small>
          <ToolRow>
            <Dropdown label="Painter mode" value="Color by Service" />
          </ToolRow>
        </ToolList>
      </Panel>
      <Panel title="Layers" w={142} pad={2} more>
        <Tool icon="layerProps" w={30}>{'Layer\nProperties'}</Tool>
        <ToolList $w={108}>
          <ToolRow>
            <Dropdown
              label="Layer"
              value="0"
              pad={53}
              lead={
                <>
                  <Glyph name="bulb" />
                  <Glyph name="sun" />
                  <Glyph name="freeze" />
                  <Glyph name="unlock" />
                  <Swatch $color="#fff" $left={1} />
                </>
              }
            />
          </ToolRow>
          <ToolRow>
            <Glyph name="stackOn" />
            <Glyph name="stackBlue" />
            <Glyph name="stackSun" />
            <Glyph name="stackBlue" />
            <Small icon="stackBlue">Make Current</Small>
          </ToolRow>
          <ToolRow>
            <Glyph name="stackOn" />
            <Glyph name="stackBlue" />
            <Glyph name="stackSun" />
            <Glyph name="stackLock" />
            <Small icon="stackMatch">Match Layer</Small>
          </ToolRow>
        </ToolList>
      </Panel>
      <Panel title="Block" w={83} pad={1} more>
        <Tool icon="insert" w={20} caret>Insert</Tool>
        <ToolList>
          <Small icon="create">Create</Small>
          <Small icon="blockEdit">Edit</Small>
          <Small icon="attributes" caret>Edit Attributes</Small>
        </ToolList>
      </Panel>
      <Panel title="Annotation" w={98} pad={1} gap={1} more>
        <Tool icon="textA" w={24} caret>Text</Tool>
        <Tool icon="dimension" w={30}>Dimension</Tool>
        <ToolList>
          <Small icon="linear" caret>Linear</Small>
          <Small icon="leader" caret>Leader</Small>
          <Small icon="table">Table</Small>
        </ToolList>
      </Panel>
      <Panel title="Properties" w={138} pad={2} more launcher>
        <Tool icon="match" w={32}>{'Match\nProperties'}</Tool>
        <ToolList $w={102}>
          <ToolRow>
            <Glyph name="wheel" />
            <Dropdown
              label="Object color"
              value="ByLayer"
              pad={19}
              lead={<Swatch $color="#000" $left={3} />}
            />
          </ToolRow>
          <ToolRow>
            <Glyph name="weights" />
            <Dropdown label="Lineweight" value="ByLayer" pad={35} lead={<Stroke />} />
          </ToolRow>
          <ToolRow>
            <Glyph name="dashes" />
            <Dropdown label="Linetype" value="ByLayer" pad={35} lead={<Stroke />} />
          </ToolRow>
        </ToolList>
      </Panel>
      <Panel title="Utilities" w={51} pad={3} more>
        <Tool icon="ruler" w={32} caret>Measure</Tool>
        <ToolList>
          <Small icon="quickSelect" label="Quick select" />
          <Small icon="selectAll" label="Select all" />
          <Small icon="calculator" label="Quick calculator" />
        </ToolList>
      </Panel>
    </Ribbon>
  );
}

function ProjectManager() {
  return (
    <SidePanel $w={157}>
      <SideContent>
        <SideTitle>PROJECT MANAGER</SideTitle>
        <ProjectArea>
          <FieldLabel htmlFor="current-project">Current Project:</FieldLabel>
          <ProjectPicker>
            <PickerField $w={99}>
              <Select id="current-project" $pad={10}>
                <option>Class 1</option>
              </Select>
              <PickerArrow>
                <Caret />
              </PickerArrow>
            </PickerField>
            <Glyph name="printer" size={11} />
            <Glyph name="copy" size={10} />
            <Caret />
          </ProjectPicker>
          <SectionBar $top={4}>
            Project
            <IconRow $gap={1}>
              <Glyph name="magnifier" size={8} />
              <Glyph name="folderOpen" size={8} />
              <Glyph name="tree" size={8} />
              <IconButton aria-label="Refresh" style={{ color: '#46c878' }}>
                <Glyph name="refresh" size={8} />
              </IconButton>
              <Caret />
            </IconRow>
          </SectionBar>
          <Frame $grow={196}>
            <TreeSearch>
              <input aria-label="Search project" placeholder="Search" />
              <Glyph name="magnifier" size={9} />
            </TreeSearch>
            <Rows>
              {tree.map((n) => (
                <TreeRow key={n.text} $indent={n.indent}>
                  {n.toggle && <Toggle />}
                  <Glyph name={n.icon} size={8} />
                  {n.selected ? <Selected>{n.text}</Selected> : n.text}
                </TreeRow>
              ))}
            </Rows>
          </Frame>
          <SectionBar $top={7}>
            Details
            <IconRow $gap={1}>
              <Glyph name="sheet" size={8} />
              <Glyph name="sheet" size={8} />
              <Glyph name="sheet" size={8} />
              <Caret />
            </IconRow>
          </SectionBar>
          <Frame $grow={187}>
            <Info>
              {details.map((line) => (
                <div key={line}>{line}</div>
              ))}
            </Info>
            <HScroll>
              <span>‹</span>
              <Thumb $w={60} />
              <span>›</span>
            </HScroll>
          </Frame>
        </ProjectArea>
      </SideContent>
      <VerticalTabs $w={12}>
        <VerticalTab $h={63} $active>Source Files</VerticalTab>
        <VerticalTab $h={63}>Orthographic DWG</VerticalTab>
        <VerticalTab $h={63}>Isometric DWG</VerticalTab>
      </VerticalTabs>
    </SidePanel>
  );
}

function NoTransfer({ x, y }) {
  return (
    <g transform={`translate(${x} ${y})`}>
      <path d="M-9 -4l4 -4v2h6v4h-6v2z" fill="#1c1c1c" />
      <path d="M9 4l-4 -4v2h-6v4h6v2z" fill="#1c1c1c" />
      <circle r="12" fill="none" stroke="#ec1c24" strokeWidth="2.5" />
      <path d="M-8 8L8 -8" stroke="#ec1c24" strokeWidth="4" />
    </g>
  );
}

function Connector({ y, selected }) {
  const stroke = selected ? '#163f96' : '#444';
  const shape = (
    <>
      <path d={`M389.5 ${y}.5h261v33.5h-261z`} />
      <path d={`M480 ${y}v34`} />
      <path d={`M651 ${y}l16 17l-16 17z`} />
    </>
  );
  return (
    <g fill="none" stroke={stroke}>
      {selected && (
        <g stroke="#8fb8f5" strokeWidth="3">
          {shape}
        </g>
      )}
      {selected && <path d={`M651 ${y}l16 17l-16 17z`} fill="#4a80dc" />}
      {shape}
      {[2, 4, 6, 8, 10, 12].map((d) => (
        <path key={d} d={`M${651.5 + d} ${y + d}v${34 - d * 2}`} />
      ))}
      {[
        [393.5, y - 5.5],
        [393.5, y + 53.5],
        [435, y + 24.5],
        [566, y + 24.5],
      ].map(([cx, cy]) => (
        <circle key={`${cx}-${cy}`} cx={cx} cy={cy} r="1" fill={selected ? '#3d7be0' : '#999'} />
      ))}
    </g>
  );
}

function Drawing() {
  return (
    <Sheet aria-label="Drawing">
      <g transform="translate(-168 -100)">
        <path d="M174.5 100v700" stroke="#444" strokeDasharray="2 1" />
        <path d="M256.5 100v700" stroke="#666" />
        <path d="M308 100v700" stroke="#ff0" strokeWidth="2" />
        <path d="M338.5 118v420" stroke="#fbd9a0" strokeDasharray="20 11" strokeDashoffset="3" />
        <path d="M667 328.5h900" stroke="#a9a2ee" />
        <path d="M667 482.5h62" stroke="#5d57ea" />
        <path d="M759.5 482v300" stroke="#8f8bf0" />
        <path d="M728 474.500l31.500 8l-31.500 8z" fill="#000" />
        <NoTransfer x={373} y={328} />
        <NoTransfer x={373} y={482} />
        <Connector y={311} selected />
        <Connector y={465} />
        <path d="M320.500 519v26M318 541.500h28" fill="none" stroke="#555" />
        <path d="M321 509l3 4l3 -4M324 513v3M348 536l6 6M354 536l-6 6" fill="none" stroke="#333" />
      </g>
    </Sheet>
  );
}

function ValidationSummary() {
  const [ignore, setIgnore] = useState(false);

  return (
    <Dialog role="dialog" aria-label="Validation Summary">
      <DialogStrip>
        <Glyph name="close" size={7} />
        <Glyph name="pin" size={6} />
        <Glyph name="gear" size={6} />
        <StripTitle>VALIDATION SUMMARY</StripTitle>
        <Badge>
          <Glyph name="logo" size={7} />
        </Badge>
      </DialogStrip>
      <DialogBody>
        <DialogHead>
          <span>Current project: Class 1</span>
          <BoxButton aria-label="Revalidate">
            <Glyph name="validated" size={9} />
          </BoxButton>
          <BoxButton aria-label="Refresh">
            <Glyph name="refresh" size={9} />
          </BoxButton>
        </DialogHead>
        <ErrorBox>
          <ErrorView>
            <ErrorRows>
              {errors.map((e, i) => (
                <TreeRow key={i} $indent={e.folder ? 25 : 42} $gap={1}>
                  {e.folder && <Toggle />}
                  <Glyph name={e.folder ? 'blueFolder' : 'redX'} size={e.folder ? 9 : 7} />
                  <ErrorName $selected={e.selected}>{e.text}</ErrorName>
                </TreeRow>
              ))}
            </ErrorRows>
            <VScroll>
              <Up />
              <Thumb />
              <Caret />
            </VScroll>
          </ErrorView>
          <HScroll $h={9}>
            <span>‹</span>
            <Thumb $w={70} />
            <span>›</span>
          </HScroll>
        </ErrorBox>
        <IgnoreLabel>
          <input type="checkbox" checked={ignore} onChange={() => setIgnore(!ignore)} />
          Don't display errors marked as ignored
        </IgnoreLabel>
        <DetailsBar>
          Details
          <Glyph name="chevrons" size={6} />
        </DetailsBar>
        <ErrorTable>
          <tbody>
            <tr>
              <th scope="row">Error type</th>
              <td>Unresolved off-page c...</td>
            </tr>
            <tr>
              <th scope="row">Error action</th>
              <td>&lt;Unassigned&gt;</td>
            </tr>
          </tbody>
        </ErrorTable>
        <Description>
          <textarea
            aria-label="Error description"
            readOnly
            value="Off-page connectors that don't point to another drawing."
          />
          <VScroll>
            <Up />
            <Caret />
          </VScroll>
        </Description>
      </DialogBody>
    </Dialog>
  );
}

function ToolPalettes() {
  return (
    <SidePanel $w={119}>
      <VerticalTabs $w={12}>
        {paletteTabs.map((t) => (
          <VerticalTab key={t} $h={t === 'Lines' ? 62 : 61} $active={t === 'Equipment'}>
            {t}
          </VerticalTab>
        ))}
      </VerticalTabs>
      <SideContent>
        <SideTitle>TOOL PALETTES - P&amp;ID PIP</SideTitle>
        <Palette>
          <PaletteList>
            {palettes.map((p) => (
              <PaletteSection key={p.title}>
                <h3>{p.title}</h3>
                <PaletteIcons>
                  {p.icons.map((icon, i) => (
                    <PaletteTool key={i} aria-label={`${p.title} ${i + 1}`}>
                      <Glyph name={icon} size={16} />
                    </PaletteTool>
                  ))}
                </PaletteIcons>
              </PaletteSection>
            ))}
          </PaletteList>
          <PaletteScroll />
        </Palette>
      </SideContent>
    </SidePanel>
  );
}

function App() {
  return (
    <>
      <GlobalStyle />
      <Page>
        <Backdrop>
          <svg width="16" height="3" viewBox="0 0 16 3" fill="none" stroke="currentColor">
            <path d="M4 2l3-3M13 2l-3-3" strokeWidth="2" />
          </svg>
        </Backdrop>
        <Window>
          <Header>
            <AppButton aria-label="Application menu">
              <Glyph name="logo" size={15} />
              <Caret />
              PID
            </AppButton>
            <TitleBar>
              <QuickTools $gap={3}>
                {quickTools.map((t) => (
                  <IconButton key={t} aria-label={t} $w={9}>
                    <Glyph name={t} size={9} />
                  </IconButton>
                ))}
                <Caret />
                <IconButton aria-label="redo" $w={9}>
                  <Glyph name="redo" size={9} />
                </IconButton>
                <Caret />
                <Caret />
              </QuickTools>
              <Title>Autodesk AutoCAD Plant 3D 2020 -   01.dwg</Title>
              <IconRow $gap={4}>
                <IconRow $gap={1}>
                  <Expand />
                  <SearchInput aria-label="Search help" placeholder="Type a keyword or phrase" />
                </IconRow>
                <Glyph name="binoculars" size={8} />
                <UserMenu>
                  <Glyph name="user" size={8} />
                  IanMatthew
                </UserMenu>
                <Caret />
                <Glyph name="cart" size={8} />
                <Glyph name="appTri" size={8} />
                <Caret />
                <Divider />
                <HelpButton aria-label="Help">?</HelpButton>
                <Caret />
                <WindowButtons $gap={5}>
                  <IconButton aria-label="Minimise" $w={8}>
                    <Glyph name="minimise" size={7} />
                  </IconButton>
                  <IconButton aria-label="Restore" $w={8}>
                    <Glyph name="restore" size={7} />
                  </IconButton>
                  <IconButton aria-label="Close" $w={10}>
                    <Glyph name="close" size={8} />
                  </IconButton>
                </WindowButtons>
              </IconRow>
            </TitleBar>
            <MenuTabs>
              {menus.map((m) => (
                <MenuTab key={m} $active={m === 'Home'}>
                  {m}
                </MenuTab>
              ))}
              <MenuTab $contextual>Layout</MenuTab>
              <IconButton aria-label="Ribbon display" $w={16}>
                <Glyph name="media" size={7} />
                <Caret />
              </IconButton>
            </MenuTabs>
          </Header>
          <RibbonBar />
          <FileTabs>
            <FileTab $w={67} $pad={17}>Start</FileTab>
            <FileTab $w={69} $pad={11} $active>
              01* <Glyph name="close" size={5} />
            </FileTab>
            <FileTab $w={61} $pad={11}>
              01* <Glyph name="close" size={5} />
            </FileTab>
            <FileTab $w={61} $pad={11}>
              02 <Glyph name="close" size={5} />
            </FileTab>
            <FileTab $w={16} $pad={5}>
              <Glyph name="plus" size={6} />
            </FileTab>
          </FileTabs>
          <Workspace>
            <ProjectManager />
            <Canvas>
              <History>
                <span>Command:</span>
                <span>Command:</span>
                <span>Enter new value for OPMCOMMAND &lt;1&gt;:</span>
              </History>
              <Drawing />
              <ViewLabel>[+][Top][2D Wireframe]</ViewLabel>
              <DocButtons>
                <Glyph name="boxMin" size={7} />
                <Glyph name="maximise" size={7} />
                <Glyph name="boxX" size={7} />
              </DocButtons>
              <ViewCube>
                <span>N</span>
                <span>W</span>
                <CubeFace>TOP</CubeFace>
                <span>E</span>
                <span>S</span>
              </ViewCube>
              <Wcs>
                WCS <Caret />
              </Wcs>
              <CommandLine>
                <CommandGrip>
                  <Glyph name="close" size={6} />
                  <Glyph name="wrench" size={9} />
                </CommandGrip>
                <Glyph name="prompt" size={9} />
                <Caret />
                <input aria-label="Command" placeholder="Type a command" />
                <Up />
              </CommandLine>
              <ValidationSummary />
            </Canvas>
            <ToolPalettes />
          </Workspace>
          <StatusBar>
            {statusItems.map((s, i) => (
              <StatusItem key={i} $w={s.w} $on={s.on} aria-label={s.icon || s.text || 'More'}>
                {s.text}
                {s.icon && <Glyph name={s.icon} size={9} />}
                {s.caret && <Caret />}
              </StatusItem>
            ))}
          </StatusBar>
        </Window>
        <Tooltip role="tooltip">01.dwg</Tooltip>
      </Page>
    </>
  );
}

export default App;
